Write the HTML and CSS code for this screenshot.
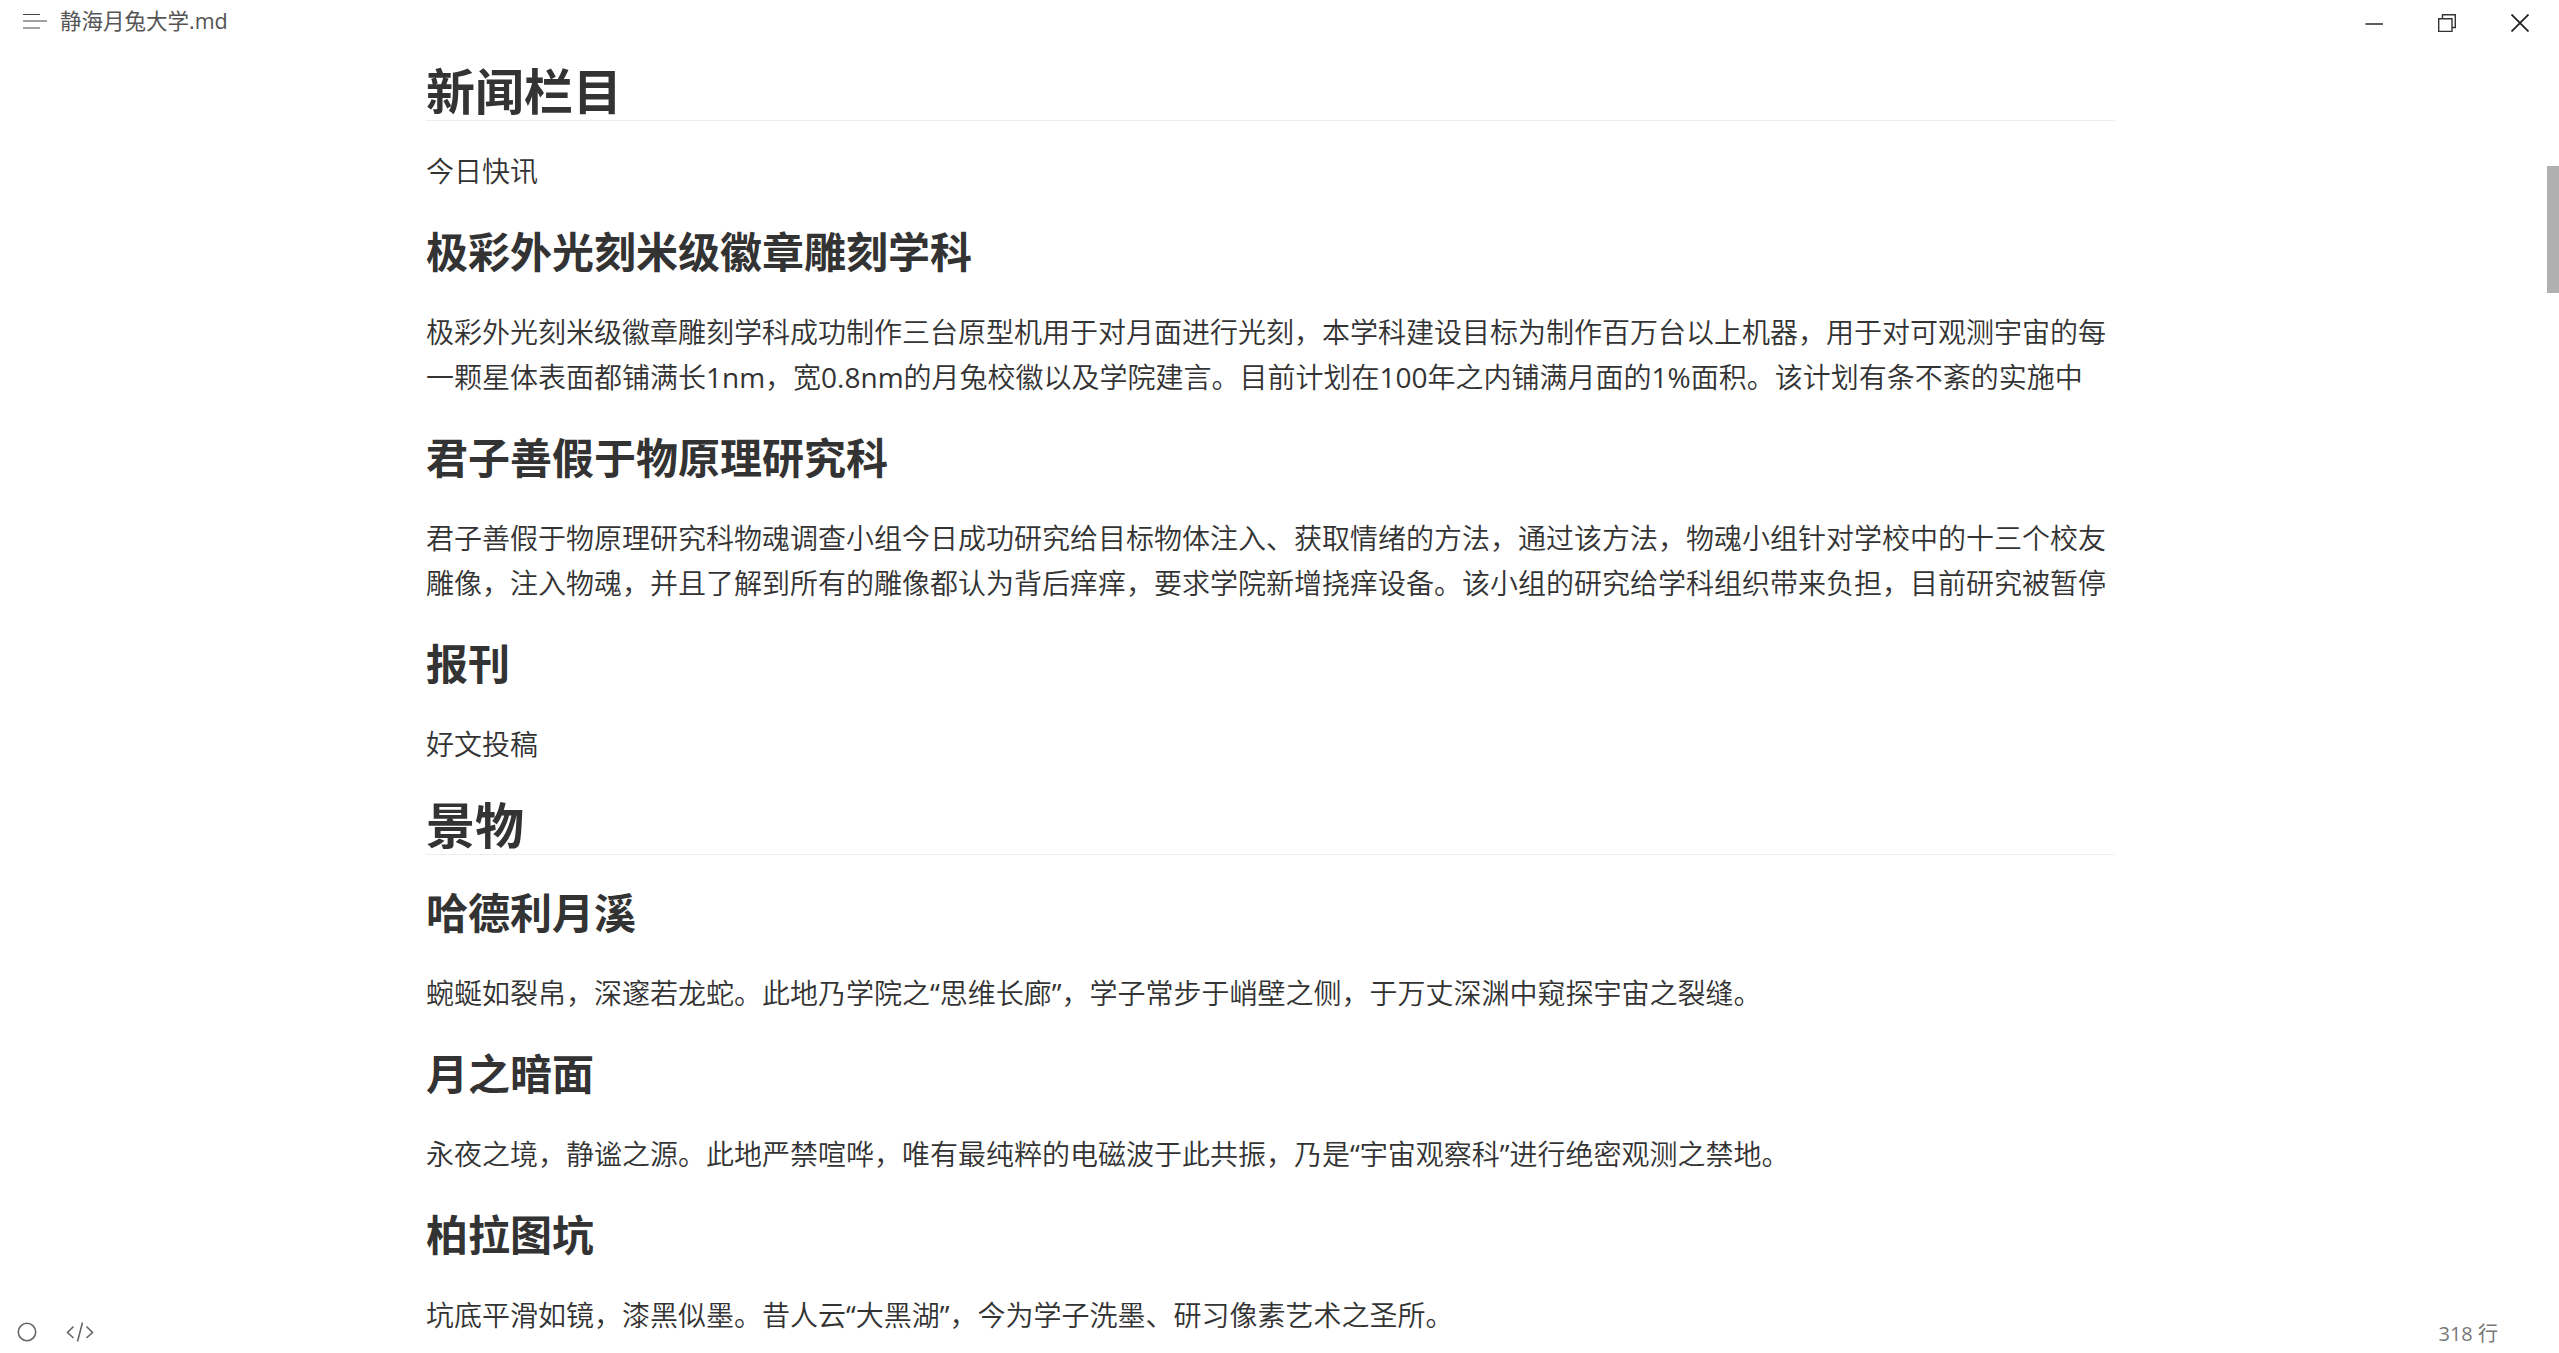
FILE: index.html
```html
<!DOCTYPE html>
<html lang="zh-CN">
<head>
<meta charset="utf-8">
<title>静海月兔大学.md</title>
<link rel="stylesheet" href="styles.css">
</head>
<body>
<header class="titlebar">
  <div class="title-left">
    <svg class="menu-icon" width="24" height="16" viewBox="0 0 24 16"><path d="M0 1.5H17M0 8H24M0 15H17" stroke="#444" stroke-width="1.2" fill="none"/></svg>
    <span class="filename">静海月兔大学.md</span>
  </div>
  <div class="window-controls">
    <svg width="18" height="18" viewBox="0 0 18 18"><path d="M.5 10H18" stroke="#333" stroke-width="1.6" fill="none"/></svg>
    <svg width="18" height="18" viewBox="0 0 18 18"><path d="M.7 4.7H14V17.5H.7ZM4.5 4.5V.7H17.3V13.5H14" stroke="#333" stroke-width="1.4" fill="none"/></svg>
    <svg width="18" height="18" viewBox="0 0 18 18"><path d="M0.5 0.5L17.5 17.5M17.5 0.5L0.5 17.5" stroke="#222" stroke-width="1.8" fill="none"/></svg>
  </div>
</header>
<main class="editor">
  <article class="doc">
    <h2>新闻栏目</h2>
    <p>今日快讯</p>
    <h3>极彩外光刻米级徽章雕刻学科</h3>
    <p>极彩外光刻米级徽章雕刻学科成功制作三台原型机用于对月面进行光刻，本学科建设目标为制作百万台以上机器，用于对可观测宇宙的每一颗星体表面都铺满长1nm，宽0.8nm的月兔校徽以及学院建言。目前计划在100年之内铺满月面的1%面积。该计划有条不紊的实施中</p>
    <h3>君子善假于物原理研究科</h3>
    <p>君子善假于物原理研究科物魂调查小组今日成功研究给目标物体注入、获取情绪的方法，通过该方法，物魂小组针对学校中的十三个校友雕像，注入物魂，并且了解到所有的雕像都认为背后痒痒，要求学院新增挠痒设备。该小组的研究给学科组织带来负担，目前研究被暂停</p>
    <h3>报刊</h3>
    <p>好文投稿</p>
    <h2>景物</h2>
    <h3>哈德利月溪</h3>
    <p>蜿蜒如裂帛，深邃若龙蛇。此地乃学院之“思维长廊”，学子常步于峭壁之侧，于万丈深渊中窥探宇宙之裂缝。</p>
    <h3>月之暗面</h3>
    <p>永夜之境，静谧之源。此地严禁喧哗，唯有最纯粹的电磁波于此共振，乃是“宇宙观察科”进行绝密观测之禁地。</p>
    <h3>柏拉图坑</h3>
    <p>坑底平滑如镜，漆黑似墨。昔人云“大黑湖”，今为学子洗墨、研习像素艺术之圣所。</p>
  </article>
  <div class="scroll-thumb"></div>
</main>
<footer class="statusbar">
  <div class="status-left">
    <svg width="20" height="20" viewBox="0 0 20 20"><circle cx="10" cy="10" r="8.7" stroke="#666" stroke-width="1.6" fill="none"/></svg>
    <svg width="28" height="22" viewBox="0 0 28 22"><path d="M7.5 5.5L1.5 11.5L7.5 17M20.5 5.5L26.5 11.5L20.5 17M16.5 1.5L11.5 20.5" stroke="#666" stroke-width="1.6" fill="none"/></svg>
  </div>
  <span class="word-count">318 行</span>
</footer>
</body>
</html>
```
FILE: styles.css
```css
html, body { margin: 0; height: 100%; overflow: hidden; background: #fff; }
body { font-family: "Open Sans", "Noto Sans CJK SC", sans-serif; color: #333; position: relative; }
.titlebar { position: absolute; top: 0; left: 0; right: 0; height: 44px; display: flex; justify-content: space-between; background: #fff; z-index: 2; }
.title-left { display: flex; align-items: center; gap: 13px; padding-left: 23px; height: 42px; }
.filename { font-size: 21.5px; color: #555; line-height: 42px; }
.window-controls { display: flex; align-items: center; gap: 55px; padding-right: 30px; height: 46px; }
.editor { height: 100%; }
.doc { width: 1689px; margin-left: 426px; padding-top: 60px; font-size: 28px; line-height: 45px; }
.doc h2 { font-size: 49px; line-height: 62px; height: 60px; margin: 27px 0 28px; border-bottom: 1px solid #eee; font-weight: 700; }
.doc h2:first-child { margin-top: 0; }
.doc h3 { font-size: 42px; line-height: 60px; margin: 28px 0; font-weight: 700; }
.doc p { margin: 0; font-family: "Open Sans", "Noto Sans CJK SC DemiLight", "Noto Sans CJK SC", sans-serif; }
.scroll-thumb { position: absolute; right: 0; top: 166px; width: 12px; height: 127px; background: #b0b0b0; }
.statusbar { position: absolute; left: 0; right: 0; bottom: 0; height: 42px; display: flex; justify-content: space-between; align-items: center; z-index: 2; }
.status-left { display: flex; align-items: center; gap: 29px; padding-left: 17px; }
.word-count { font-size: 20px; color: #777; padding-right: 61px; }
```
